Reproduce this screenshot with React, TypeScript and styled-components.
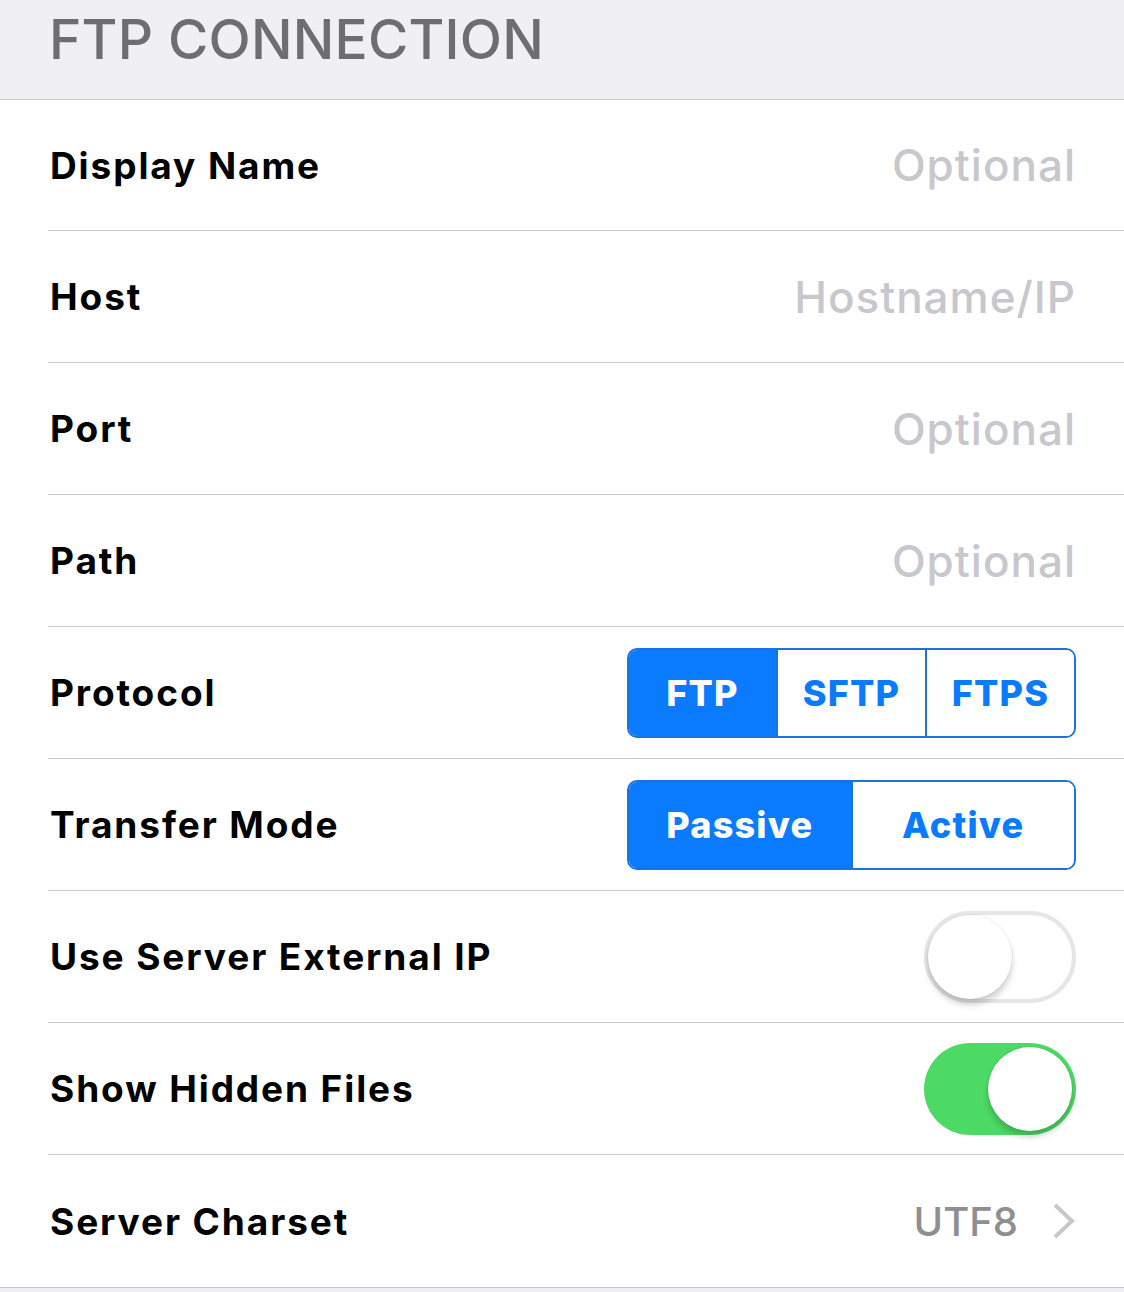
import styled, { createGlobalStyle } from 'styled-components';

const GlobalStyle = createGlobalStyle`
  html, body {
    margin: 0;
    padding: 0;
    background: #efeff4;
    font-family: Inter, "Noto Sans", "Liberation Sans", sans-serif;
    -webkit-font-smoothing: antialiased;
  }
`;

const Page = styled.div`
  width: 1124px;
  min-height: 1292px;
  background: #efeff4;
`;

const SectionHeader = styled.div`
  height: 100px;
  box-sizing: border-box;
  padding: 7px 49px 0;
  border-bottom: 1px solid #c8c7cc;
  font-size: 55px;
  font-weight: 500;
  color: #6d6d72;
  line-height: 64px;
  letter-spacing: 0.2px;
`;

const List = styled.div`
  background: #fff;
  border-bottom: 1px solid #c8c7cc;
`;

const Row = styled.div<{ $last?: boolean }>`
  margin-left: 48px;
  height: 132px;
  box-sizing: border-box;
  padding-right: 48px;
  display: flex;
  align-items: center;
  justify-content: space-between;
  border-bottom: ${({ $last }) => ($last ? 'none' : '1px solid #c8c7cc')};
  &:first-child {
    height: 131px;
  }
`;

const Label = styled.div`
  padding-left: 2px;
  font-size: 37px;
  font-weight: 700;
  color: #000;
  letter-spacing: 1.9px;
`;

const Placeholder = styled.div`
  font-size: 44px;
  font-weight: 500;
  color: #c7c7cd;
  letter-spacing: 1px;
`;

const Segmented = styled.div<{ $width: number }>`
  display: flex;
  width: ${({ $width }) => $width}px;
  height: 90px;
  box-sizing: border-box;
  border: 2px solid #1a73e0;
  border-radius: 10px;
  overflow: hidden;
`;

const Segment = styled.div<{ $active?: boolean }>`
  flex: 1;
  display: flex;
  align-items: center;
  justify-content: center;
  font-size: 36px;
  font-weight: 800;
  letter-spacing: 1.2px;
  color: ${({ $active }) => ($active ? '#fff' : '#0a7aff')};
  background: ${({ $active }) => ($active ? '#0a7aff' : '#fff')};
  & + & {
    border-left: 2px solid #1a73e0;
  }
`;

const Switch = styled.div<{ $on?: boolean }>`
  position: relative;
  width: 152px;
  height: 92px;
  box-sizing: border-box;
  border-radius: 46px;
  background: ${({ $on }) => ($on ? '#4cd964' : '#fff')};
  border: ${({ $on }) => ($on ? 'none' : '4px solid #e5e5ea')};
`;

const Knob = styled.div<{ $on?: boolean }>`
  position: absolute;
  top: ${({ $on }) => ($on ? '4px' : '0')};
  ${({ $on }) => ($on ? 'right: 4px;' : 'left: 0;')}
  width: 84px;
  height: 84px;
  border-radius: 50%;
  background: #fff;
  box-shadow: 0 6px 6px rgba(0, 0, 0, 0.18), 0 0 2px rgba(0, 0, 0, 0.15);
`;

const Detail = styled.div`
  display: flex;
  align-items: center;
  gap: 34px;
  font-size: 40px;
  font-weight: 500;
  color: #8e8e93;
`;

const Chevron = () => (
  <svg width="24" height="38" viewBox="0 0 24 38">
    <path d="M3 3 L20 19 L3 35" fill="none" stroke="#c7c7cc" strokeWidth="4" />
  </svg>
);

const textRows = [
  { label: 'Display Name', placeholder: 'Optional' },
  { label: 'Host', placeholder: 'Hostname/IP' },
  { label: 'Port', placeholder: 'Optional' },
  { label: 'Path', placeholder: 'Optional' },
];

const App = () => {
  return (
    <Page>
      <GlobalStyle />
      <SectionHeader>FTP CONNECTION</SectionHeader>
      <List>
        {textRows.map((r) => (
          <Row key={r.label}>
            <Label>{r.label}</Label>
            <Placeholder>{r.placeholder}</Placeholder>
          </Row>
        ))}
        <Row>
          <Label>Protocol</Label>
          <Segmented $width={449}>
            <Segment $active>FTP</Segment>
            <Segment>SFTP</Segment>
            <Segment>FTPS</Segment>
          </Segmented>
        </Row>
        <Row>
          <Label>Transfer Mode</Label>
          <Segmented $width={449}>
            <Segment $active>Passive</Segment>
            <Segment>Active</Segment>
          </Segmented>
        </Row>
        <Row>
          <Label>Use Server External IP</Label>
          <Switch>
            <Knob />
          </Switch>
        </Row>
        <Row>
          <Label>Show Hidden Files</Label>
          <Switch $on>
            <Knob $on />
          </Switch>
        </Row>
        <Row $last>
          <Label>Server Charset</Label>
          <Detail>
            UTF8
            <Chevron />
          </Detail>
        </Row>
      </List>
    </Page>
  );
};

export default App;
